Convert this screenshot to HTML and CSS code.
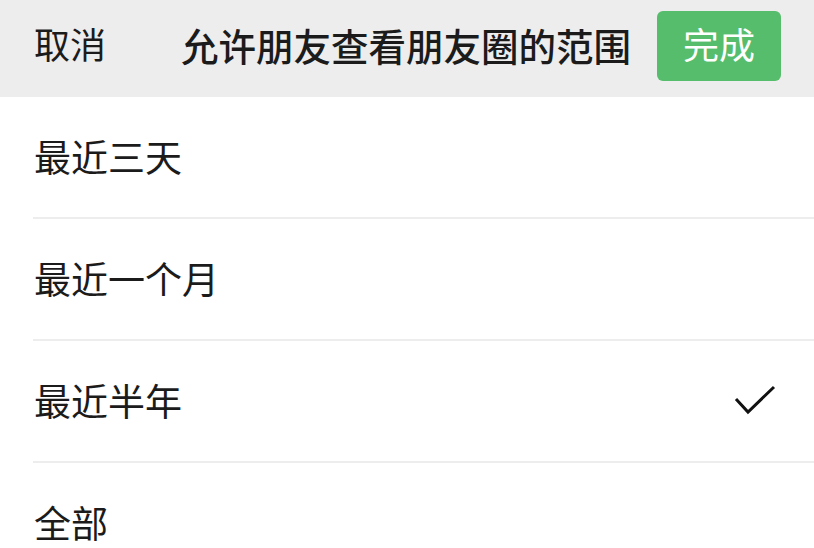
FILE: index.html
```html
<!DOCTYPE html>
<html>
<head>
  <title>允许朋友查看朋友圈的范围</title>
  <link rel="stylesheet" href="styles.css">
</head>
<body>
  <header class="top-bar">
    <span class="cancel">取消</span>
    <h1 class="title">允许朋友查看朋友圈的范围</h1>
    <button class="done">完成</button>
  </header>
  <ul class="options">
    <li class="option">最近三天</li>
    <li class="option">最近一个月</li>
    <li class="option selected">
      <span>最近半年</span>
      <svg class="check" width="42" height="32" viewBox="0 0 42 32">
        <path d="M2 14 L14 27 L40 2" fill="none" stroke="#111" stroke-width="3"/>
      </svg>
    </li>
    <li class="option">全部</li>
  </ul>
</body>
</html>
```

FILE: styles.css
```css
/* CSS*/
body {
  margin: 0;
  padding: 0;
  background-color: #fff;
  font-family: "Noto Sans CJK SC", "Noto Sans", sans-serif;
  color: #1b1b1b;
  overflow: hidden;
}

.top-bar {
  display: flex;
  align-items: center;
  box-sizing: border-box;
  height: 97px;
  padding: 0 33px 5px 34px;
  background-color: #ededed;
  line-height: 1.2;
}

.cancel {
  font-size: 36px;
  padding-bottom: 4px;
}

.title {
  margin: 0 0 0 75px;
  padding-bottom: 4px;
  font-size: 37.5px;
  font-weight: 500;
}

.done {
  margin-left: auto;
  width: 124px;
  height: 70px;
  padding: 0 0 4px;
  border: none;
  border-radius: 6px;
  background-color: #55bd6b;
  color: #fff;
  font-family: inherit;
  font-size: 36px;
  line-height: 1.2;
}

.options {
  list-style: none;
  margin: 0;
  padding: 0;
}

.option {
  display: flex;
  align-items: center;
  justify-content: space-between;
  box-sizing: border-box;
  height: 122px;
  margin-left: 33px;
  padding: 0 38px 3px 1px;
  border-bottom: 2px solid #ededed;
  font-size: 37px;
}

.check {
  display: block;
  margin-top: 3px;
}
```
